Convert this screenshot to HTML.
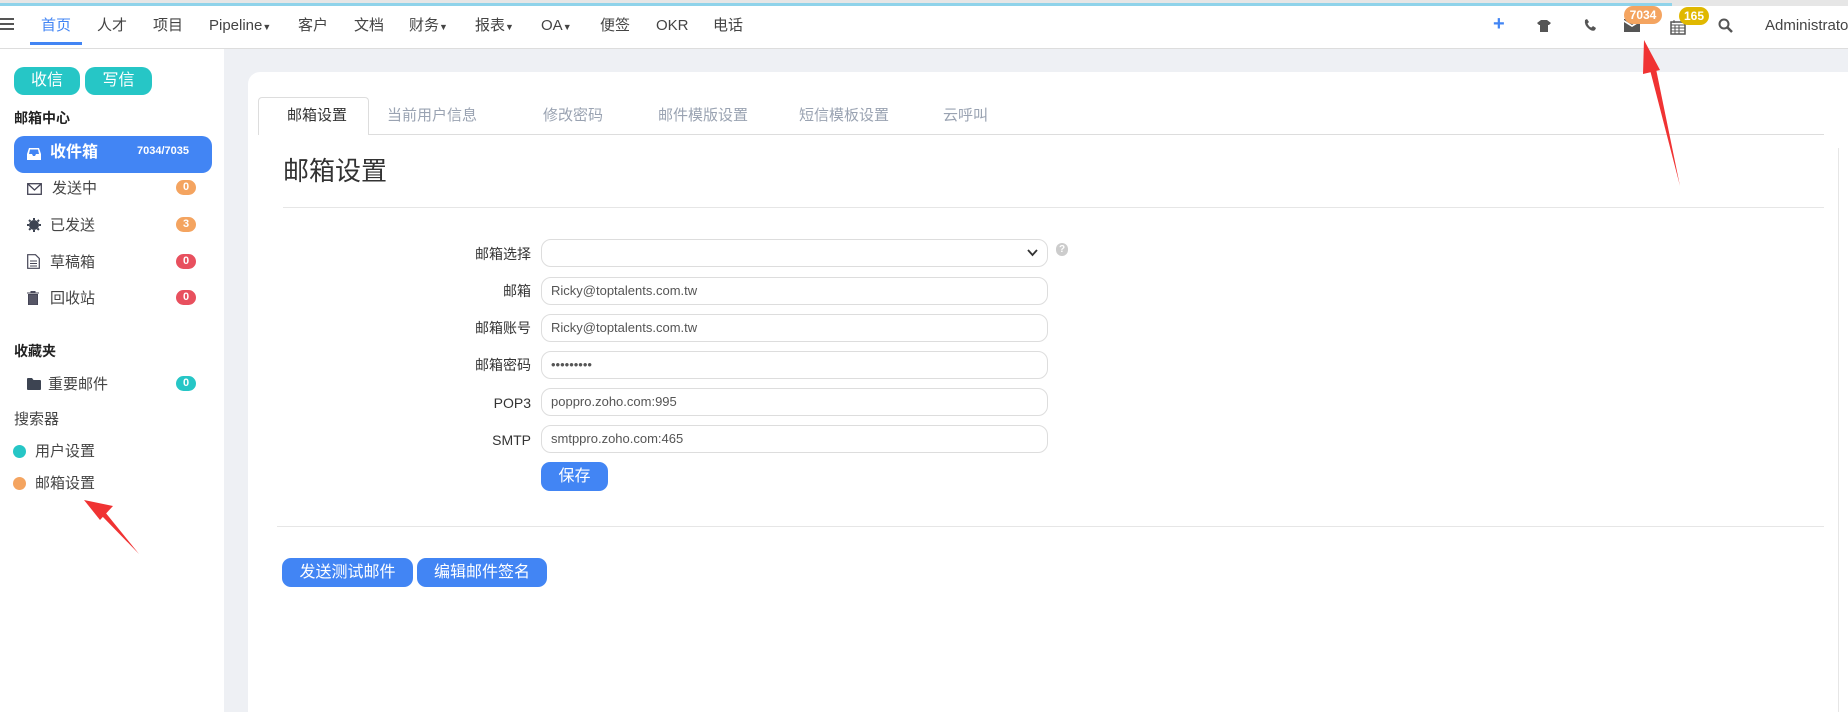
<!DOCTYPE html>
<html><head><meta charset="utf-8"><style>
*{box-sizing:border-box;margin:0;padding:0}
body{width:1848px;height:712px;overflow:hidden;background:#eef0f4;font-family:"Liberation Sans","Noto Sans CJK SC",sans-serif;color:#333;position:relative;line-height:20px}
.abs{position:absolute}
#top{left:0;top:0;width:1848px;height:49px;background:#fff;border-bottom:1px solid #ddd}
#bar{left:0;top:0;width:1848px;height:6px;background:#e6e6e6}
#bar2{left:0;top:3px;width:1672px;height:3px;background:#8fd3ea}
.nav{top:16px;font-size:15px;color:#444;white-space:nowrap;line-height:20px}
.caret{font-size:9px}
#side{left:0;top:49px;width:224px;height:663px;background:#fff}
.tbtn{top:67px;height:28px;border-radius:10px;background:#26c6c6;color:#fff;font-size:16px;text-align:center;line-height:28px}
.sh{font-size:14px;font-weight:bold;color:#222}
.it{font-size:15px;color:#444;left:48px}
.bd{left:176px;width:20px;height:15px;border-radius:8px;color:#fff;font-size:11px;font-weight:bold;text-align:center;line-height:15px}
#card{left:248px;top:72px;width:1600px;height:640px;background:#fff;border-top-left-radius:12px}
.tab{top:106px;font-size:15px;color:#9aa3b2}
.lbl{width:150px;text-align:right;left:381px;font-size:14px;color:#333}
.inp{left:541px;width:507px;height:28px;border:1px solid #ddd;border-radius:10px;background:#fff;font-size:13px;color:#555;padding-left:9px;line-height:26px}
.bb{background:#4285f4;color:#fff;border-radius:9px;text-align:center;font-size:16px}
</style></head><body>
<div id="top" class="abs"></div>
<div id="bar" class="abs"></div><div id="bar2" class="abs"></div>
<div class="abs" style="left:0;top:18px;width:14px;height:12px;border-top:2px solid #555;border-bottom:2px solid #555"><div style="margin-top:3px;height:2px;background:#555"></div></div>
<div class="abs nav" style="left:41px;color:#4285f4">首页</div>
<div class="abs" style="left:30px;top:42px;width:52px;height:3px;background:#4285f4"></div>
<div class="abs nav" style="left:97px">人才</div>
<div class="abs nav" style="left:153px">项目</div>
<div class="abs nav" style="left:209px">Pipeline<span class="caret">▼</span></div>
<div class="abs nav" style="left:298px">客户</div>
<div class="abs nav" style="left:354px">文档</div>
<div class="abs nav" style="left:409px">财务<span class="caret">▼</span></div>
<div class="abs nav" style="left:475px">报表<span class="caret">▼</span></div>
<div class="abs nav" style="left:541px">OA<span class="caret">▼</span></div>
<div class="abs nav" style="left:600px">便签</div>
<div class="abs nav" style="left:656px">OKR</div>
<div class="abs nav" style="left:713px">电话</div>
<div class="abs" style="left:1493px;top:14px;font-size:20px;font-weight:bold;color:#4285f4">+</div>
<svg class="abs" style="left:1537px;top:20px" width="14" height="12" viewBox="0 0 14 12"><path d="M0 3L4 0H10L14 3L12 5H11V12H3V5H2Z" fill="#555"/></svg>
<svg class="abs" style="left:1583px;top:19px" width="13" height="13" viewBox="0 0 13 13"><path d="M2 1L4 0L6 3L4.5 4.5Q6 8 8.5 8.5L10 7L13 9L12 11Q10 13 6 10Q1 6 2 1Z" fill="#555"/></svg>
<svg class="abs" style="left:1624px;top:19px" width="16" height="13" viewBox="0 0 16 13"><path d="M0 3L8 8L16 3V13H0Z M0 0H16V1L8 6L0 1Z" fill="#555"/></svg>
<div class="abs" style="left:1624px;top:6px;width:38px;height:18px;border-radius:9px;background:#f4a460;color:#fff;font-size:12px;font-weight:bold;text-align:center;line-height:18px">7034</div>
<svg class="abs" style="left:1670px;top:20px" width="16" height="15" viewBox="0 0 16 15"><rect x="1" y="2" width="14" height="12" fill="none" stroke="#555" stroke-width="1.5"/><path d="M1 5H15M5 5V14M9 5V14M1 8H15M1 11H15M4 0V3M12 0V3" stroke="#555" stroke-width="1"/></svg>
<div class="abs" style="left:1679px;top:7px;width:30px;height:18px;border-radius:9px;background:#e0b800;color:#fff;font-size:12px;font-weight:bold;text-align:center;line-height:18px">165</div>
<svg class="abs" style="left:1718px;top:18px" width="15" height="15" viewBox="0 0 15 15"><circle cx="6" cy="6" r="4.5" fill="none" stroke="#555" stroke-width="2"/><path d="M9.5 9.5L14 14" stroke="#555" stroke-width="2.5"/></svg>
<div class="abs" style="left:1765px;top:16px;font-size:15px;color:#444">Administrator</div>

<div id="side" class="abs"></div>
<div class="abs tbtn" style="left:14px;width:66px">收信</div>
<div class="abs tbtn" style="left:85px;width:67px">写信</div>
<div class="abs sh" style="left:14px;top:108px">邮箱中心</div>
<div class="abs" style="left:14px;top:136px;width:198px;height:37px;border-radius:10px;background:#4285f4"></div>
<svg class="abs" style="left:27px;top:148px" width="14" height="12" viewBox="0 0 14 12"><path d="M2 0H12L14 6V12H0V6Z M2 6H5L6 8H8L9 6H12L11 1.5H3Z" fill="#fff" fill-rule="evenodd"/></svg>
<div class="abs" style="left:50px;top:143px;font-size:16px;font-weight:bold;color:#fff">收件箱</div>
<div class="abs" style="left:137px;top:141px;font-size:11px;font-weight:bold;color:#fff">7034/7035</div>
<svg class="abs" style="left:27px;top:183px" width="15" height="12" viewBox="0 0 15 12"><rect x="0.7" y="0.7" width="13.6" height="10.6" fill="none" stroke="#445" stroke-width="1.3"/><path d="M1 1L7.5 7L14 1" fill="none" stroke="#445" stroke-width="1.3"/></svg>
<div class="abs it" style="left:52px;top:179px">发送中</div>
<div class="abs bd" style="top:180px;background:#f4a460">0</div>
<svg class="abs" style="left:27px;top:218px" width="14" height="14" viewBox="0 0 14 14"><circle cx="7" cy="7" r="5" fill="#3d4452"/><path d="M7 0V14M0 7H14M2 2L12 12M12 2L2 12" stroke="#3d4452" stroke-width="2" stroke-dasharray="2 10"/></svg>
<div class="abs it" style="left:50px;top:216px">已发送</div>
<div class="abs bd" style="top:217px;background:#f4a460">3</div>
<svg class="abs" style="left:27px;top:254px" width="13" height="15" viewBox="0 0 13 15"><path d="M0.7 0.7H8.5L12.3 4.5V14.3H0.7Z" fill="none" stroke="#445" stroke-width="1.2"/><path d="M3 7H10M3 9.5H10M3 12H10" stroke="#445"/></svg>
<div class="abs it" style="left:50px;top:253px">草稿箱</div>
<div class="abs bd" style="top:254px;background:#e8505e">0</div>
<svg class="abs" style="left:27px;top:291px" width="12" height="14" viewBox="0 0 12 14"><path d="M0 2H12M4 2V0H8V2M1.5 3.5H10.5V14H1.5Z" fill="#445" fill-opacity=".9" stroke="#445"/></svg>
<div class="abs it" style="left:50px;top:289px">回收站</div>
<div class="abs bd" style="top:290px;background:#e8505e">0</div>
<div class="abs sh" style="left:14px;top:341px">收藏夹</div>
<svg class="abs" style="left:27px;top:378px" width="14" height="12" viewBox="0 0 14 12"><path d="M0 1Q0 0 1 0H5L6.5 2H13Q14 2 14 3V11Q14 12 13 12H1Q0 12 0 11Z" fill="#3d4452"/></svg>
<div class="abs it" style="left:48px;top:375px">重要邮件</div>
<div class="abs bd" style="top:376px;background:#26c6c6">0</div>
<div class="abs" style="left:14px;top:410px;font-size:15px;color:#444">搜索器</div>
<div class="abs" style="left:13px;top:445px;width:13px;height:13px;border-radius:50%;background:#26c6c6"></div>
<div class="abs" style="left:35px;top:442px;font-size:15px;color:#444">用户设置</div>
<div class="abs" style="left:13px;top:477px;width:13px;height:13px;border-radius:50%;background:#f4a460"></div>
<div class="abs" style="left:35px;top:474px;font-size:15px;color:#444">邮箱设置</div>

<div id="card" class="abs"></div>
<div class="abs" style="left:258px;top:134px;width:1566px;height:1px;background:#ddd"></div>
<div class="abs" style="left:258px;top:97px;width:111px;height:38px;background:#fff;border:1px solid #ddd;border-bottom:none;border-radius:4px 4px 0 0"></div>
<div class="abs tab" style="left:287px;color:#333">邮箱设置</div>
<div class="abs tab" style="left:387px">当前用户信息</div>
<div class="abs tab" style="left:543px">修改密码</div>
<div class="abs tab" style="left:658px">邮件模版设置</div>
<div class="abs tab" style="left:799px">短信模板设置</div>
<div class="abs tab" style="left:943px">云呼叫</div>
<div class="abs" style="left:1838px;top:148px;width:1px;height:564px;background:#e6e6e6"></div>
<div class="abs" style="left:283px;top:155px;font-size:26px;line-height:32px;color:#333">邮箱设置</div>
<div class="abs" style="left:283px;top:207px;width:1541px;height:1px;background:#e6e6e6"></div>

<div class="abs lbl" style="top:244px">邮箱选择</div>
<div class="abs inp" style="top:239px"></div>
<svg class="abs" style="left:1027px;top:249px" width="11" height="8" viewBox="0 0 11 8"><path d="M1 1L5.5 6L10 1" fill="none" stroke="#333" stroke-width="1.8"/></svg>
<div class="abs" style="left:1056px;top:243px;width:12px;height:13px;border-radius:6px;background:#ccc;color:#fff;font-size:10px;font-weight:bold;text-align:center;line-height:13px">?</div>
<div class="abs lbl" style="top:281px">邮箱</div>
<div class="abs inp" style="top:277px">Ricky@toptalents.com.tw</div>
<div class="abs lbl" style="top:318px">邮箱账号</div>
<div class="abs inp" style="top:314px">Ricky@toptalents.com.tw</div>
<div class="abs lbl" style="top:355px">邮箱密码</div>
<div class="abs inp" style="top:351px;font-size:13px;letter-spacing:0">•••••••••</div>
<div class="abs lbl" style="top:393px">POP3</div>
<div class="abs inp" style="top:388px">poppro.zoho.com:995</div>
<div class="abs lbl" style="top:430px">SMTP</div>
<div class="abs inp" style="top:425px">smtppro.zoho.com:465</div>
<div class="abs bb" style="left:541px;top:462px;width:67px;height:29px;line-height:29px">保存</div>
<div class="abs" style="left:277px;top:526px;width:1547px;height:1px;background:#e6e6e6"></div>
<div class="abs bb" style="left:282px;top:558px;width:131px;height:29px;line-height:29px">发送测试邮件</div>
<div class="abs bb" style="left:417px;top:558px;width:130px;height:29px;line-height:29px">编辑邮件签名</div>

<svg class="abs" style="left:0;top:0" width="1848" height="712">
<polygon points="1680,186 1649,66 1655,64" fill="#f03333"/>
<polygon points="1644,40 1660,70 1643,74" fill="#f03333"/>
<polygon points="139,554 101,515 105,512" fill="#f03333"/>
<polygon points="84,500 113,506 100,520" fill="#f03333"/>
</svg>
</body></html>
